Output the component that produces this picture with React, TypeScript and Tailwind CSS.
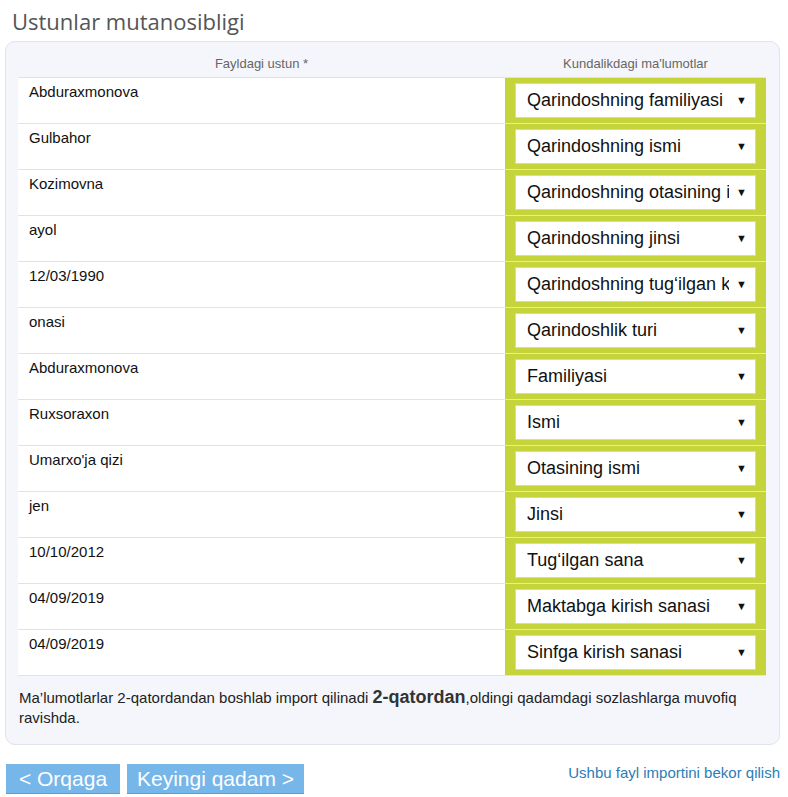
import React from "react";

const rows: [string, string][] = [
  ["Abduraxmonova", "Qarindoshning familiyasi"],
  ["Gulbahor", "Qarindoshning ismi"],
  ["Kozimovna", "Qarindoshning otasining ismi"],
  ["ayol", "Qarindoshning jinsi"],
  ["12/03/1990", "Qarindoshning tug‘ilgan kuni"],
  ["onasi", "Qarindoshlik turi"],
  ["Abduraxmonova", "Familiyasi"],
  ["Ruxsoraxon", "Ismi"],
  ["Umarxo'ja qizi", "Otasining ismi"],
  ["jen", "Jinsi"],
  ["10/10/2012", "Tug‘ilgan sana"],
  ["04/09/2019", "Maktabga kirish sanasi"],
  ["04/09/2019", "Sinfga kirish sanasi"],
];

export default function App() {
  return (
    <div className="w-[788px] h-[797px] bg-white overflow-hidden" style={{ fontFamily: "'Liberation Sans', Arial, sans-serif" }}>
      <h1 className="pl-[12px] pt-[6px] h-[41px] text-[22px] leading-[30px] text-[#555555]" style={{ fontFamily: "'Open Sans', 'Noto Sans', sans-serif" }}>
        Ustunlar mutanosibligi
      </h1>
      <div className="ml-[5px] w-[775px] h-[704px] rounded-[10px] border border-[#dfe3ea] bg-[#f4f6fc] pt-[7px] px-[12px]">
        <div className="w-[748px]">
          <div className="flex h-[29px] text-[13px] text-[#666666] leading-[30px] border-b border-[#e2e2e2]">
            <div className="w-[487px] text-center">Fayldagi ustun *</div>
            <div className="w-[261px] text-center">Kundalikdagi ma'lumotlar</div>
          </div>
          {rows.map(([a, b], i) => (
            <div key={i} className="flex h-[46px] border-b border-[#e2e2e2]">
              <div className="w-[487px] bg-white pl-[11px] pt-[5px] text-[15px] leading-[18px] text-[#111111]">{a}</div>
              <div className="w-[261px] bg-[#c5d43b] flex items-center justify-center">
                <div className="relative w-[241px] h-[35px] bg-white border border-[#d4d4d4] flex items-center pl-[11px] pr-[26px]">
                  <span className="block flex-1 min-w-0 text-[18px] text-[#111111] whitespace-nowrap overflow-hidden">{b}</span>
                  <span className="absolute right-[8px] top-[10px] text-[11px] leading-[13px] text-[#111111]">▼</span>
                </div>
              </div>
            </div>
          ))}
          <div className="pl-[1px] pt-[12px] pr-[14px] text-[15px] leading-[20px] text-[#222222]">
            Ma’lumotlarlar 2-qatordandan boshlab import qilinadi{" "}
            <b className="text-[18px] leading-[18px] text-[#333333]">2-qatordan</b>,oldingi qadamdagi sozlashlarga muvofiq ravishda.
          </div>
        </div>
      </div>
      <div className="flex items-start justify-between mt-[19px] pl-[6px] pr-[8px]">
        <div className="flex gap-[7px]">
          <button className="h-[30px] w-[114px] bg-[#76b6e8] text-white text-[21px] leading-[30px] border-b border-[#5e9fd2]">&lt; Orqaga</button>
          <button className="h-[30px] w-[177px] bg-[#76b6e8] text-white text-[21px] leading-[30px] border-b border-[#5e9fd2]">Keyingi qadam &gt;</button>
        </div>
        <a className="text-[15px] text-[#2b7db5] mt-[-2px]">Ushbu fayl importini bekor qilish</a>
      </div>
    </div>
  );
}
